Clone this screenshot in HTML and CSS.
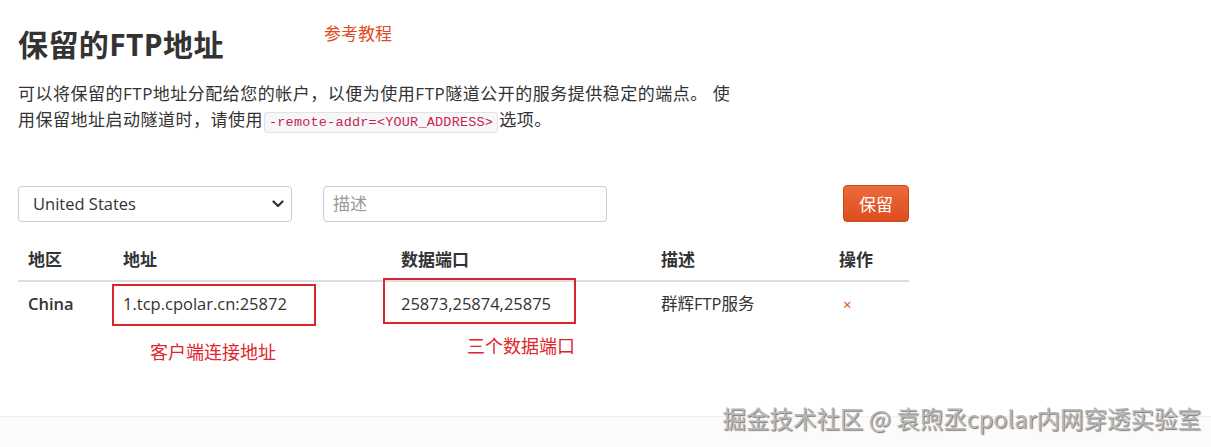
FILE: index.html
```html
<!DOCTYPE html>
<html lang="zh-CN">
<head>
<meta charset="utf-8">
<title>保留的FTP地址</title>
<link rel="stylesheet" href="styles.css">
</head>
<body>
<div class="page">
  <main class="content">
    <div class="title-row">
      <h1 class="title">保留的FTP地址</h1>
      <a class="ref-link" href="#">参考教程</a>
    </div>
    <p class="intro">可以将保留的FTP地址分配给您的帐户，以便为使用FTP隧道公开的服务提供稳定的端点。 使用保留地址启动隧道时，请使用<code class="code">-remote-addr=&lt;YOUR_ADDRESS&gt;</code>选项。</p>

    <form class="reserve-form">
      <div class="select-wrap">
        <select class="region-select">
          <option>United States</option>
          <option>China</option>
        </select>
        <svg class="chevron" width="12" height="8" viewBox="0 0 12 8"><path d="M1.5 1.5 L6 6 L10.5 1.5" fill="none" stroke="#333" stroke-width="2.2" stroke-linecap="round" stroke-linejoin="round"/></svg>
      </div>
      <input class="desc-input" type="text" placeholder="描述">
      <button class="reserve-btn" type="button">保留</button>
    </form>

    <div class="table-area">
      <table class="addr-table">
        <thead>
          <tr>
            <th class="c1">地区</th>
            <th class="c2">地址</th>
            <th class="c3">数据端口</th>
            <th class="c4">描述</th>
            <th class="c5">操作</th>
          </tr>
        </thead>
        <tbody>
          <tr>
            <th class="row-head">China</th>
            <td>1.tcp.cpolar.cn:25872</td>
            <td>25873,25874,25875</td>
            <td>群辉FTP服务</td>
            <td><a class="del" href="#">×</a></td>
          </tr>
        </tbody>
      </table>
      <div class="mark mark-addr"></div>
      <div class="mark mark-ports"></div>
      <span class="note note-addr">客户端连接地址</span>
      <span class="note note-ports">三个数据端口</span>
    </div>
  </main>
  <footer class="footer"></footer>
  <div class="watermark">掘金技术社区 @ 袁煦丞cpolar内网穿透实验室</div>
</div>
</body>
</html>
```

FILE: styles.css
```css
* { box-sizing: border-box; }
html, body { margin: 0; padding: 0; background: #fff; }
body {
  font-family: "Open Sans", "Noto Sans CJK SC", sans-serif;
  font-size: 17px;
  color: #333;
  width: 1211px;
  height: 447px;
  overflow: hidden;
}
.page { position: relative; height: 447px; display: flex; flex-direction: column; }
.content { padding: 0 18px; height: 416px; }

.title-row { display: flex; align-items: flex-start; gap: 100px; padding-top: 24px; }
.title {
  margin: 4px 0 0;
  font-size: 30px;
  font-weight: 700;
  line-height: 34px;
  color: #333;
  font-family: "Open Sans", "Noto Sans CJK SC", sans-serif;
  letter-spacing: 0.4px;
}
.ref-link { color: #dd4b24; text-decoration: none; font-size: 17px; line-height: 20px; }

.intro {
  margin: 19px 0 0;
  width: 720px;
  line-height: 26px;
  font-size: 17px;
  letter-spacing: 0.5px;
  color: #333;
}
.code {
  font-family: "Liberation Mono", "DejaVu Sans Mono", monospace;
  font-size: 13.5px;
  letter-spacing: 0.2px;
  color: #c7254e;
  background: #f7f7f9;
  border: 1px solid #e1e1e8;
  border-radius: 3px;
  padding: 2px 4px;
  margin: 0 1px;
}

.reserve-form { display: flex; align-items: center; margin-top: 49px; height: 37px; }
.select-wrap { position: relative; width: 274px; height: 36px; }
.region-select {
  appearance: none;
  -webkit-appearance: none;
  width: 100%;
  height: 36px;
  border: 1px solid #ccc;
  border-radius: 4px;
  background: #fff;
  padding: 0 14px;
  font-family: "Open Sans", "Noto Sans CJK SC", sans-serif;
  font-size: 16.5px;
  color: #333;
}
.chevron { position: absolute; right: 8px; top: 14px; pointer-events: none; }
.desc-input {
  margin-left: 31px;
  width: 284px;
  height: 36px;
  border: 1px solid #ccc;
  border-radius: 4px;
  padding: 0 9px;
  font-family: "Open Sans", "Noto Sans CJK SC", sans-serif;
  font-size: 17px;
  color: #333;
}
.desc-input::placeholder { color: #999; }
.reserve-btn {
  margin-left: 236px;
  width: 66px;
  height: 37px;
  border: 1px solid #c8471b;
  border-radius: 4px;
  background: linear-gradient(#ec6a3e, #dc4d1c);
  color: #fff;
  font-family: "Open Sans", "Noto Sans CJK SC", sans-serif;
  font-size: 17px;
  padding: 0;
}

.table-area { position: relative; margin-top: 17px; width: 891px; }
.addr-table { width: 891px; border-collapse: collapse; table-layout: fixed; }
.addr-table th, .addr-table td { text-align: left; padding: 9px 10px; line-height: 23px; font-size: 16.5px; }
.addr-table thead th { font-weight: 700; border-bottom: 2px solid #ddd; font-size: 17px; }
.addr-table tbody th, .addr-table tbody td { padding: 10px 10px; line-height: 24px; }
.row-head { font-weight: 600; }
.c1 { width: 95px; }
.c2 { width: 278px; }
.c3 { width: 260px; }
.c4 { width: 178px; }
.c5 { width: 80px; }
.del { color: #dd4814; text-decoration: none; font-size: 15px; padding-left: 4px; }

.mark { position: absolute; border: 2px solid #d9262c; }
.mark-addr { left: 94px; top: 45px; width: 204px; height: 42px; }
.mark-ports { left: 365px; top: 39px; width: 193px; height: 46px; }
.note { position: absolute; color: #e0252b; font-size: 18px; line-height: 20px; }
.note-addr { left: 132px; top: 103px; }
.note-ports { left: 449px; top: 97px; }

.footer { flex: 1; border-top: 1px solid #eee; background: #fbfbfb; }

.watermark {
  position: absolute;
  right: 10px;
  top: 404px;
  font-family: "Noto Sans CJK SC", sans-serif;
  font-weight: 400;
  font-size: 23.5px;
  line-height: 28px;
  color: #b8b8b8;
  text-shadow: 1px 1px 1px #777;
}
```
